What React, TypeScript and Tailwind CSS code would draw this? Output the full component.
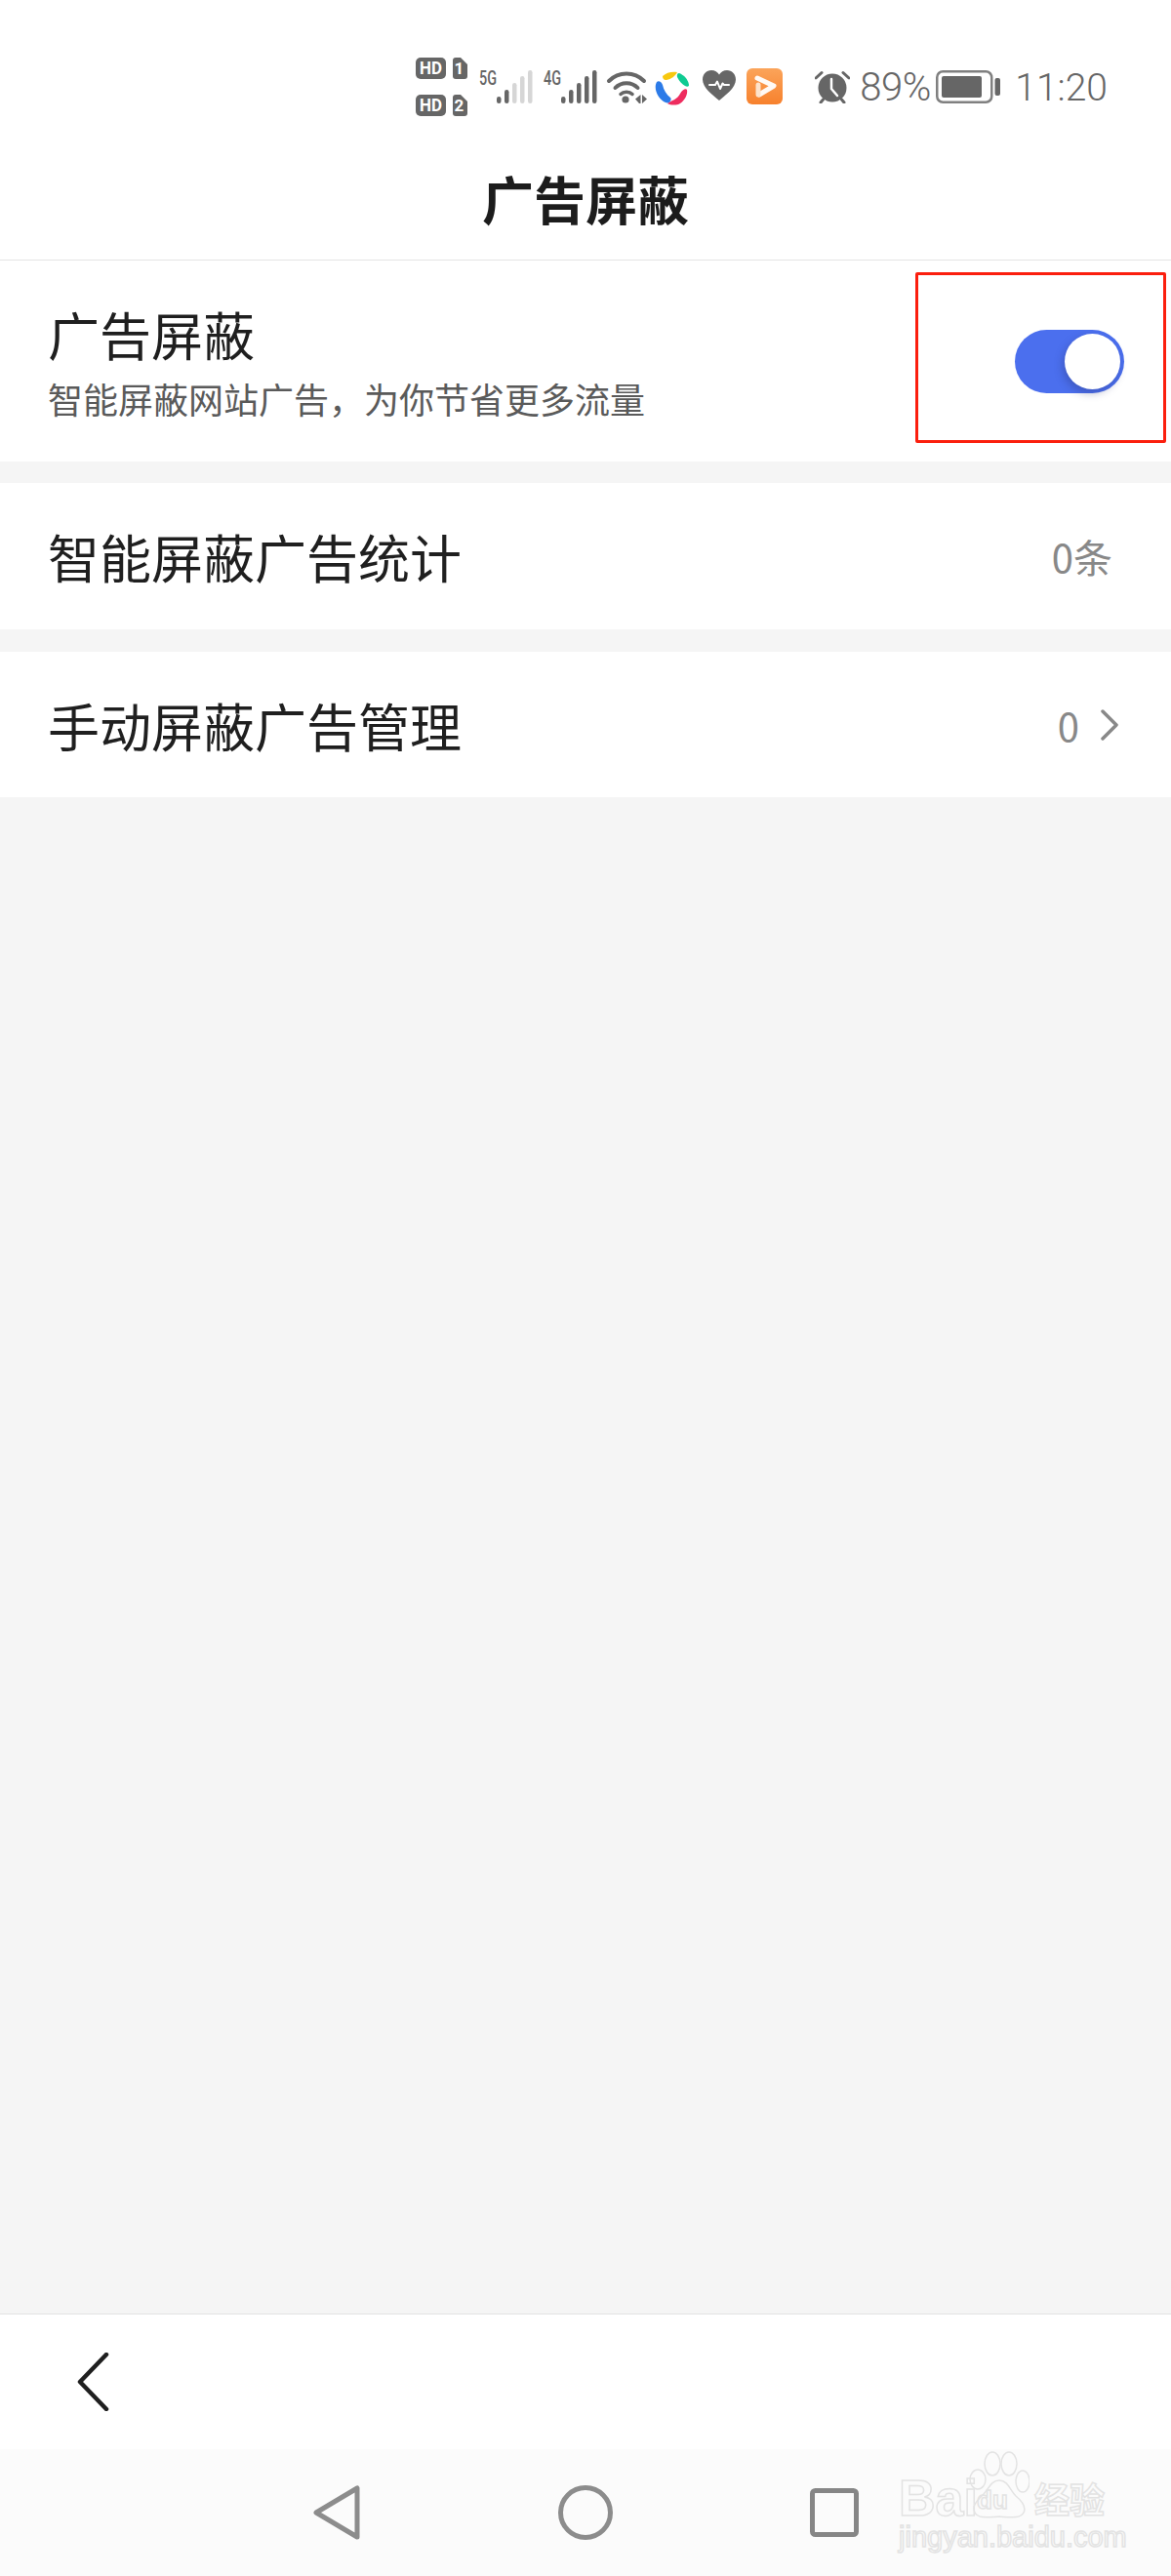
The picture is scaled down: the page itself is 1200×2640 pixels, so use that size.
import React from "react";

const CJK = "font-['Noto_Sans_CJK_SC','Noto_Sans',sans-serif]";

function SimTags() {
  const tag = (y: number, n: string) => (
    <g key={n}>
      <rect x="0" y={y} width="31" height="22" rx="5" fill="#666" />
      <text x="15.5" y={y + 17} fontSize="18" fontWeight="700" fill="#fff" textAnchor="middle" textLength="23" lengthAdjust="spacingAndGlyphs" fontFamily="Roboto, sans-serif">HD</text>
      <path d={`M41 ${y}h5l7 7v12a3 3 0 0 1-3 3h-9a3 3 0 0 1-3-3v-16a3 3 0 0 1 3-3z`} fill="#666" />
      <text x="44.5" y={y + 17} fontSize="17" fontWeight="700" fill="#fff" textAnchor="middle" fontFamily="Roboto, sans-serif">{n}</text>
    </g>
  );
  return (
    <svg width="53" height="60" viewBox="0 0 53 60" className="mt-[-13px]">
      {tag(0, "1")}
      {tag(38, "2")}
    </svg>
  );
}

function Signal({ label, dark }: { label: string; dark: number }) {
  const bars = [27, 20, 13, 6, 0];
  return (
    <svg width="54" height="34" viewBox="0 0 54 34" className="overflow-visible">
      <text x="0" y="15" fontSize="21" fontWeight="500" fill="#666" textLength="18" lengthAdjust="spacingAndGlyphs" fontFamily="Roboto, sans-serif">{label}</text>
      {bars.map((top, i) => (
        <rect key={i} x={18 + i * 8} y={top} width="4.5" height={34 - top} rx="2.25" fill={i < dark ? "#666" : "#d6d6d6"} />
      ))}
    </svg>
  );
}

function Wifi() {
  return (
    <svg width="42" height="34" viewBox="0 0 42 34" fill="none">
      <path d="M3 11C13 1 29 1 39 11" stroke="#666" strokeWidth="4" strokeLinecap="round" />
      <path d="M9.500 18C15.500 11.500 26.500 11.500 32.500 18" stroke="#666" strokeWidth="4" strokeLinecap="round" />
      <path d="M15 24.500C18 21.500 24 21.500 27 24.500" stroke="#666" strokeWidth="3.500" strokeLinecap="round" />
      <circle cx="20" cy="30" r="3.600" fill="#666" />
      <path d="M35.500 25v9h-1.500l-4-4.500zM37 25v9l5-4.500z" fill="#666" />
    </svg>
  );
}

function SwirlLogo() {
  return (
    <svg width="36" height="36" viewBox="0 0 36 36" fill="none">
      <path d="M8 6C12 2 18 1 23 2C21 6 17 9 12 10C10 10.500 8 9 8 6Z" fill="#f7c80f" />
      <path d="M25 3C30 5 34 9 35 15C35 17 33 17 31 16C28 14.500 25 11 23 7C22.500 5 23 3 25 3Z" fill="#0fcb92" />
      <path d="M33 20C34 24 31 31 26 34C23 36 16 36 13 34C17 31 23 30 26 24C28 20 32 18 33 20Z" fill="#ee2c5e" />
      <path d="M2 12C4 10 7 12 8 15C9 20 12 25 16 28C18 30 15 35 11 33C4 30 -2 19 2 12Z" fill="#2c7be8" />
    </svg>
  );
}

function Heart() {
  return (
    <svg width="34" height="31" viewBox="0 0 34 31">
      <path d="M17 31C10 25 0 18 0 9.500C0 4 4 0 9 0C12.500 0 15.500 2 17 4.500C18.500 2 21.500 0 25 0C30 0 34 4 34 9.500C34 18 24 25 17 31Z" fill="#666" />
      <path d="M7 15H13L15 11.500L18 19L20.500 13.500L22 15H27" fill="none" stroke="#fff" strokeWidth="2" strokeLinejoin="round" strokeLinecap="round" />
    </svg>
  );
}

function OrangeApp() {
  return (
    <svg width="37" height="37" viewBox="0 0 37 37">
      <defs>
        <linearGradient id="orangeGrad" x1="0" y1="0" x2="0" y2="1">
          <stop offset="0" stopColor="#fba45a" />
          <stop offset="1" stopColor="#f7812d" />
        </linearGradient>
      </defs>
      <rect width="37" height="37" rx="6" fill="url(#orangeGrad)" />
      <path d="M11 10L28 18L13 27" fill="none" stroke="#fff" strokeWidth="5" strokeLinecap="round" strokeLinejoin="round" opacity="0.95" />
      <path d="M12 17v10" stroke="#fde3cc" strokeWidth="5" strokeLinecap="round" />
    </svg>
  );
}

function Alarm() {
  return (
    <svg width="36" height="34" viewBox="0 0 36 34" fill="none">
      <circle cx="18" cy="18" r="14.500" fill="#666" />
      <path d="M17 9V19L23 26" stroke="#fff" strokeWidth="2.500" strokeLinecap="round" strokeLinejoin="round" />
      <path d="M1 8L7 2.500M35 8L29 2.500" stroke="#666" strokeWidth="3" strokeLinecap="round" />
      <path d="M6 33L8.500 30M30 33L27.500 30" stroke="#666" strokeWidth="3" strokeLinecap="round" />
    </svg>
  );
}

function Battery() {
  return (
    <svg width="66" height="34" viewBox="0 0 66 34" fill="none">
      <rect x="1.250" y="1.250" width="56" height="31.500" rx="6" stroke="#808080" strokeWidth="2.500" />
      <rect x="6" y="6" width="41" height="22" rx="2" fill="#666" />
      <rect x="60.500" y="8" width="5.500" height="18" rx="2" fill="#666" />
    </svg>
  );
}

function StatusBar() {
  return (
    <div className="h-[140px] flex items-start justify-end pr-[65px] pt-[72px]">
      <SimTags />
      <div className="ml-[12px] flex"><Signal label="5G" dark={2} /></div>
      <div className="ml-[12px] flex"><Signal label="4G" dark={5} /></div>
      <div className="ml-[10px] flex"><Wifi /></div>
      <div className="ml-[8px] flex"><SwirlLogo /></div>
      <div className="ml-[13px] flex"><Heart /></div>
      <div className="ml-[11px] flex mt-[-2px]"><OrangeApp /></div>
      <div className="ml-[33px] flex"><Alarm /></div>
      <span className="ml-[10px] font-['Roboto',sans-serif] text-[40px] leading-[36px] text-[#666] font-light w-[71px] tracking-[-0.5px] whitespace-nowrap">89%</span>
      <div className="ml-[7px] flex"><Battery /></div>
      <span className="ml-[15px] font-['Roboto',sans-serif] text-[39px] leading-[36px] text-[#666] font-light">11:20</span>
    </div>
  );
}

function Chevron({ className, color, width }: { className?: string; color: string; width: number }) {
  return (
    <svg className={className} viewBox="0 0 18 32" fill="none">
      <path d="M2 2L16 16L2 30" stroke={color} strokeWidth={width} strokeLinecap="round" strokeLinejoin="round" />
    </svg>
  );
}

function Watermark() {
  const outline = "text-transparent [-webkit-text-stroke:1.5px_#e3e3e3]";
  return (
    <div className="absolute left-[921px] top-[2512px] w-[216px] h-[102px] pointer-events-none">
      <span className={`absolute left-0 top-[22px] font-['Liberation_Sans',sans-serif] font-bold text-[52px] leading-[52px] ${outline}`}>Bai</span>
      <svg className="absolute left-[72px] top-0" width="62" height="70" viewBox="0 0 62 70" fill="none" stroke="#e3e3e3" strokeWidth="1.500">
        <ellipse cx="9" cy="29" rx="8" ry="10" />
        <ellipse cx="24" cy="13" rx="8" ry="12" />
        <ellipse cx="41" cy="13" rx="8" ry="12" />
        <ellipse cx="55" cy="31" rx="7" ry="11" />
        <path d="M31 30C22 30 20 40 13 46C7 52 3 57 6 63C9 69 18 68 31 67C44 68 53 69 56 63C59 57 54 51 48 46C42 40 40 30 31 30Z" />
      </svg>
      <span className={`absolute left-[80px] top-[37px] font-['Liberation_Sans',sans-serif] font-bold text-[26px] leading-[26px] ${outline}`}>du</span>
      <span className={`absolute left-[139px] top-[28px] ${CJK} font-bold text-[36px] leading-[40px] ${outline}`}>经验</span>
      <span className={`absolute left-0 top-[72px] font-['Liberation_Sans',sans-serif] text-[29px] leading-[32px] whitespace-nowrap ${outline} [-webkit-text-stroke-width:1px]`}>jingyan.baidu.com</span>
    </div>
  );
}

export default function App() {
  return (
    <div className={`relative w-[1200px] h-[2640px] overflow-hidden flex flex-col bg-[#f5f5f5] ${CJK}`}>
      <div className="bg-white border-b border-[#e4e4e4] h-[267px] flex flex-col">
        <StatusBar />
        <div className="h-[126px] flex items-center justify-center text-[53px] leading-[64px] font-bold text-[#1c1c1c]">广告屏蔽</div>
      </div>

      <div className="relative h-[206px] bg-white flex items-center justify-between pl-[49px] pr-[48px]">
        <div className="flex flex-col">
          <div className="text-[53px] leading-[70px] text-[#1f1f1f]">广告屏蔽</div>
          <div className="mt-[6px] text-[36px] leading-[50px] text-[#5a5a5a]">智能屏蔽网站广告，为你节省更多流量</div>
        </div>
        <div className="w-[112px] h-[65px] rounded-full bg-[#4b6fee] flex items-center justify-end pr-[4px]">
          <div className="w-[57px] h-[57px] rounded-full bg-white shadow-[-2px_4px_8px_rgba(40,50,110,0.35)]" />
        </div>
        <div className="absolute left-[938px] top-[12px] w-[257px] h-[175px] border-[3px] border-[#fb1f0e] rounded-[2px]" />
      </div>

      <div className="mt-[22px] h-[150px] bg-white flex items-center justify-between pl-[49px] pr-[60px]">
        <div className="text-[53px] leading-[70px] text-[#1f1f1f]">智能屏蔽广告统计</div>
        <div className="text-[40px] leading-[50px] text-[#888]">0条</div>
      </div>

      <div className="mt-[23px] h-[149px] bg-white flex items-center justify-between pl-[49px] pr-[54px]">
        <div className="text-[53px] leading-[70px] text-[#1f1f1f]">手动屏蔽广告管理</div>
        <div className="flex items-center gap-[22px]">
          <span className="text-[40px] leading-[50px] text-[#888]">0</span>
          <Chevron className="w-[18px] h-[32px]" color="#888" width={3.500} />
        </div>
      </div>

      <div className="flex-1" />

      <div className="h-[139px] bg-white border-t border-[#e2e2e2] flex items-center pl-[78px]">
        <svg width="34" height="60" viewBox="0 0 34 60" fill="none">
          <path d="M31 2L4 30L31 58" stroke="#1f1f1f" strokeWidth="4.500" strokeLinecap="round" strokeLinejoin="round" />
        </svg>
      </div>

      <div className="h-[130px] bg-[#fbfbfb] flex items-start pl-[321px] pt-[37px]">
        <svg width="48" height="56" viewBox="0 0 48 56" fill="none">
          <path d="M45 3V53L3 28Z" stroke="#8c8c8c" strokeWidth="5" strokeLinejoin="round" />
        </svg>
        <svg width="56" height="56" viewBox="0 0 56 56" fill="none" className="ml-[203px]">
          <circle cx="28" cy="28" r="25.500" stroke="#8c8c8c" strokeWidth="5" />
        </svg>
        <svg width="50" height="50" viewBox="0 0 50 50" fill="none" className="mt-[3px] ml-[202px]">
          <rect x="2.500" y="2.500" width="45" height="45" rx="3" stroke="#868686" strokeWidth="5" />
        </svg>
      </div>

      <Watermark />
    </div>
  );
}
